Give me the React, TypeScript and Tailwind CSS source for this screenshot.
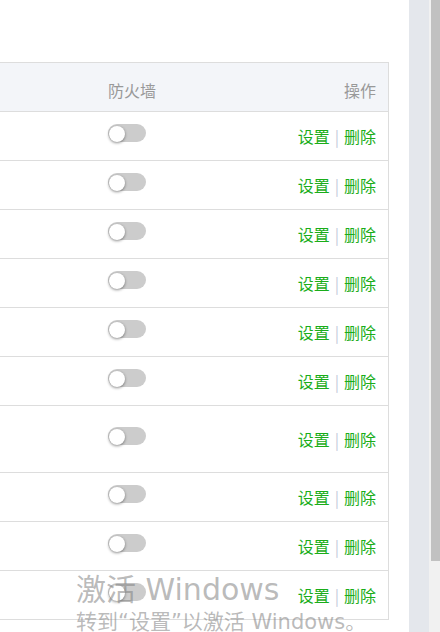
import React from 'react';

// row heights in px (content only, border adds 1)
const rows = [48, 48, 48, 48, 48, 48, 66, 48, 48, 48];

function Toggle() {
  return (
    <div className="relative mb-[6px] h-[18px] w-[38px] rounded-full bg-[#cccccc]">
      <div className="absolute left-[1px] top-[2px] h-[16px] w-[16px] rounded-full bg-white shadow-[0_1px_3px_rgba(0,0,0,0.45)]" />
    </div>
  );
}

function Row({ h }: { h: number }) {
  return (
    <div className="flex items-center border-b border-[#dddddd]" style={{ height: h + 1 }}>
      <div className="w-[108px] shrink-0" />
      <div className="flex-1">
        <Toggle />
      </div>
      <div className="flex items-center pr-3 text-[16px] leading-none">
        <span className="text-[#1aad19]">设置</span>
        <span className="mx-[5px] text-[#c5cadb]">|</span>
        <span className="text-[#1aad19]">删除</span>
      </div>
    </div>
  );
}

export default function App() {
  return (
    <div
      className="relative flex h-[632px] w-[440px] overflow-hidden bg-white"
      style={{ fontFamily: '"Noto Sans CJK SC", "Noto Sans", sans-serif' }}
    >
      <div className="w-[409px] shrink-0 pt-[62px]">
        <div className="w-[389px] border-t border-r border-[#dddddd]">
          <div className="flex h-[49px] items-center border-b border-[#dddddd] bg-[#f3f5f9] pt-[5px] text-[16px] text-[#999999]">
            <div className="w-[108px] shrink-0" />
            <div className="flex-1">防火墙</div>
            <div className="pr-3">操作</div>
          </div>
          {rows.map((h, i) => (
            <Row key={i} h={h} />
          ))}
        </div>
      </div>
      <div className="w-[20px] shrink-0 bg-[#e4e7ec]" />
      <div className="w-[11px] shrink-0 bg-[#f1f1f1] pl-[2px]">
        <div className="h-[561px] bg-[#c1c1c1]" />
      </div>

      {/* activation watermark */}
      <div
        className="pointer-events-none absolute left-[76px] top-[572px] whitespace-nowrap text-[rgba(128,128,128,0.55)]"
        style={{ fontFamily: '"DejaVu Sans", "Noto Sans CJK SC", sans-serif' }}
      >
        <div className="text-[30px] leading-[36px]">激活 Windows</div>
        <div className="text-[21px] leading-[28px]">转到“设置”以激活 Windows。</div>
      </div>
    </div>
  );
}
